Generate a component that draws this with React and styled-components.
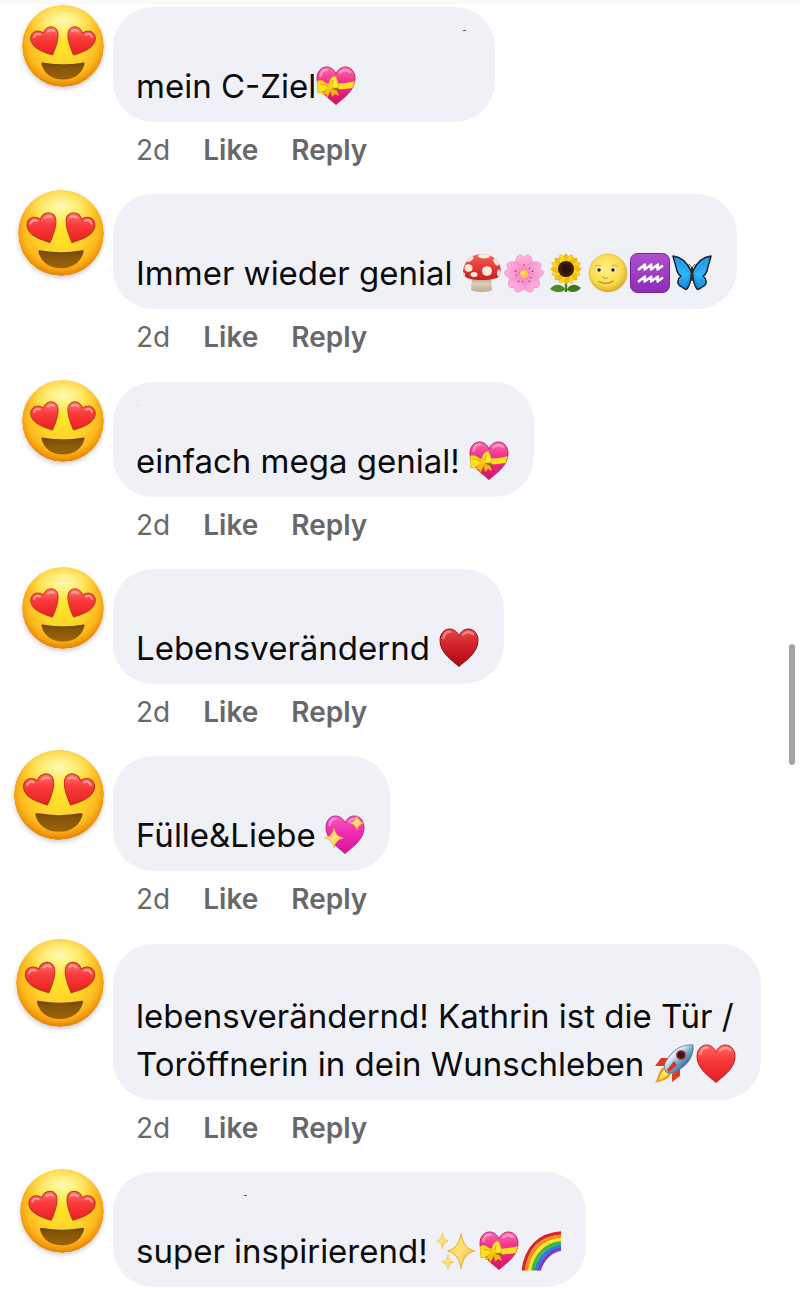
import React from "react";
import styled, { createGlobalStyle } from "styled-components";

const GlobalStyle = createGlobalStyle`
  * {
    box-sizing: border-box;
  }
  body {
    margin: 0;
    background: #ffffff;
    font-family: "Inter", "Liberation Sans", sans-serif;
    color: #0b0b0d;
  }
`;

const Thread = styled.main`
  display: flex;
  flex-direction: column;
  justify-content: space-between;
  min-height: 100vh;
  padding: 7px 32px 7px 0;
  background: linear-gradient(#fafafb 4px, #ffffff 4px);
`;

const Row = styled.article`
  display: flex;
  align-items: flex-start;
`;

const AvatarSlot = styled.div`
  flex: none;
  display: flex;
  align-items: center;
  justify-content: flex-end;
  width: 113px;
  height: 78px;
  padding-right: 9px;
`;

const Avatar = styled.svg`
  flex: none;
  width: ${(p) => p.$size}px;
  height: ${(p) => p.$size}px;
  border-radius: 50%;
  box-shadow: 0 2px 4px rgba(60, 50, 80, 0.25);
`;

const Body = styled.div`
  display: flex;
  flex-direction: column;
  align-items: flex-start;
`;

const Bubble = styled.div`
  min-width: ${(p) => (p.$wide ? "382px" : "0")};
  padding: 0 25px 12px 23px;
  border-radius: 40px;
  background: #f0f1f6;
`;

const NameLine = styled.div`
  display: flex;
  align-items: flex-start;
  height: ${(p) => (p.$short ? "48px" : "55px")};
  padding-top: 23px;
`;

const Speck = styled.span`
  width: 3px;
  height: 1px;
  margin-left: ${(p) => p.$at}px;
  background: ${(p) => (p.$faint ? "#dcdde1" : "#55565a")};
`;

const Text = styled.p`
  margin: 0;
  font-size: 33px;
  line-height: 48px;
  white-space: nowrap;
`;

const Icon = styled.svg`
  width: 40px;
  height: 40px;
  margin-right: 2px;
  vertical-align: -8px;
  overflow: visible;

  &:last-child {
    margin-right: 0;
  }
`;

const Actions = styled.div`
  display: flex;
  gap: 33px;
  padding: 11px 23px 0;
  font-size: 28px;
  line-height: 34px;
  color: #67686b;
`;

const Action = styled.button`
  padding: 0;
  border: 0;
  background: none;
  font: inherit;
  font-weight: 600;
  color: inherit;
  cursor: pointer;
`;

const ScrollThumb = styled.div`
  position: fixed;
  top: 644px;
  right: 5px;
  width: 6px;
  height: 121px;
  border-radius: 3px;
  background: #a5a5a5;
`;

const Defs = styled.svg`
  position: absolute;
  width: 0;
  height: 0;
`;

const HEART =
  "M20 38.500C14 33 1 25 1 12.500C1 6 5 1 10.500 1C15 1 18.500 4 20 8C21.500 4 25 1 29.500 1C35 1 39 6 39 12.500C39 25 26 33 20 38.500Z";
const EYE =
  "M30.500 50C22 47.500 10 43.500 8.700 34.500C8 27.500 15 23.500 21.500 28C22.500 22.500 30 19.500 34.300 24C38.500 29 34.500 41 30.500 50Z";
const STAR = "M0 -10Q1.500 -1.500 10 0Q1.500 1.500 0 10Q-1.500 1.500 -10 0Q-1.500 -1.500 0 -10Z";

function SharedDefs() {
  return (
    <Defs aria-hidden="true">
      <defs>
        <radialGradient id="face" cx="0.5" cy="0.44" r="0.56">
          <stop offset="0" stopColor="#ffe62c" />
          <stop offset="0.5" stopColor="#ffd52a" />
          <stop offset="0.78" stopColor="#fdb91f" />
          <stop offset="0.9" stopColor="#f39d0e" />
          <stop offset="1" stopColor="#df7f04" />
        </radialGradient>
        <radialGradient id="shine" cx="0.5" cy="0.35" r="0.5">
          <stop offset="0" stopColor="#fffcc0" stopOpacity="0.95" />
          <stop offset="0.55" stopColor="#fff88a" stopOpacity="0.6" />
          <stop offset="1" stopColor="#fff25a" stopOpacity="0" />
        </radialGradient>
        <linearGradient id="eye" x1="0" y1="0" x2="0" y2="1">
          <stop offset="0" stopColor="#ff7572" />
          <stop offset="0.4" stopColor="#fb3b3c" />
          <stop offset="1" stopColor="#e8201f" />
        </linearGradient>
        <linearGradient id="mouth" x1="0" y1="0" x2="0" y2="1">
          <stop offset="0" stopColor="#70450c" />
          <stop offset="0.3" stopColor="#865509" />
          <stop offset="1" stopColor="#9a6408" />
        </linearGradient>
        <linearGradient id="pink" x1="0" y1="0" x2="0" y2="1">
          <stop offset="0" stopColor="#ff6bae" />
          <stop offset="0.35" stopColor="#f2358f" />
          <stop offset="1" stopColor="#d80f68" />
        </linearGradient>
        <linearGradient id="magenta" x1="0" y1="0" x2="0" y2="1">
          <stop offset="0" stopColor="#fb5cc0" />
          <stop offset="0.4" stopColor="#ef2fae" />
          <stop offset="1" stopColor="#d9129a" />
        </linearGradient>
        <linearGradient id="red" x1="0" y1="0" x2="0" y2="1">
          <stop offset="0" stopColor="#ff6a62" />
          <stop offset="0.4" stopColor="#fa3a3a" />
          <stop offset="1" stopColor="#e01e26" />
        </linearGradient>
        <linearGradient id="darkRed" x1="0" y1="0" x2="0" y2="1">
          <stop offset="0" stopColor="#e8494a" />
          <stop offset="0.4" stopColor="#d3242b" />
          <stop offset="1" stopColor="#ae0710" />
        </linearGradient>
        <radialGradient id="moon" cx="0.45" cy="0.4" r="0.6">
          <stop offset="0" stopColor="#fff08a" />
          <stop offset="0.7" stopColor="#f7da4e" />
          <stop offset="1" stopColor="#d9ac2b" />
        </radialGradient>
        <linearGradient id="violet" x1="0" y1="0" x2="0" y2="1">
          <stop offset="0" stopColor="#b04fd2" />
          <stop offset="1" stopColor="#8f2bb4" />
        </linearGradient>
        <linearGradient id="wing" x1="0" y1="0" x2="0" y2="1">
          <stop offset="0" stopColor="#1f9be6" />
          <stop offset="0.6" stopColor="#2fb8fb" />
          <stop offset="1" stopColor="#1287dc" />
        </linearGradient>
        <linearGradient id="cap" x1="0" y1="0" x2="0" y2="1">
          <stop offset="0" stopColor="#f4645a" />
          <stop offset="0.5" stopColor="#e63a38" />
          <stop offset="1" stopColor="#c2201f" />
        </linearGradient>
        <linearGradient id="stem" x1="0" y1="0" x2="0" y2="1">
          <stop offset="0" stopColor="#a08b74" />
          <stop offset="0.4" stopColor="#dccdb6" />
          <stop offset="1" stopColor="#c2ad92" />
        </linearGradient>
        <linearGradient id="petal" x1="0" y1="0" x2="0" y2="1">
          <stop offset="0" stopColor="#ffb2de" />
          <stop offset="1" stopColor="#f97fc4" />
        </linearGradient>
        <linearGradient id="hull" x1="0" y1="0" x2="1" y2="1">
          <stop offset="0" stopColor="#4f9bd0" />
          <stop offset="0.35" stopColor="#e3f1f9" />
          <stop offset="0.55" stopColor="#6da4cc" />
          <stop offset="0.85" stopColor="#1d4c7c" />
        </linearGradient>
        <linearGradient id="gold" x1="0" y1="0" x2="1" y2="1">
          <stop offset="0" stopColor="#ffd447" />
          <stop offset="0.5" stopColor="#ffe27a" />
          <stop offset="1" stopColor="#efae22" />
        </linearGradient>
        <clipPath id="heartClip">
          <path d={HEART} />
        </clipPath>
        <clipPath id="capClip">
          <path d="M20 1C9 1 1 10 1 19C1 25 8 27 20 27C32 27 39 25 39 19C39 9 31 1 20 1Z" />
        </clipPath>
      </defs>
    </Defs>
  );
}

function HeartEye({ flip }) {
  return (
    <g transform={flip ? "translate(82 0) scale(-1 1)" : undefined}>
      <path d={EYE} fill="url(#eye)" stroke="#b9361a" strokeWidth="1" />
      <path
        d="M12 32Q14 27.500 18 29.500M26 26.500Q29 24 32 26"
        fill="none"
        stroke="#ffb0a8"
        strokeOpacity="0.8"
        strokeWidth="2"
        strokeLinecap="round"
      />
    </g>
  );
}

function HeartEyes({ size }) {
  return (
    <Avatar $size={size} viewBox="0 0 82 82" role="img" aria-label="Profile picture">
      <circle cx="41" cy="41" r="41" fill="url(#face)" />
      <ellipse cx="41" cy="22" rx="37" ry="22" fill="url(#shine)" />
      <HeartEye />
      <HeartEye flip />
      <path
        d="M19.500 59C19.200 57.500 20.500 57.300 22 57.700Q41 61 60 57.700C61.500 57.300 62.800 57.500 62.500 59C60 69 52 74.500 41 74.500C30 74.500 22 69 19.500 59Z"
        fill="url(#mouth)"
      />
    </Avatar>
  );
}

function Heart({ fill, edge }) {
  return (
    <>
      <path d={HEART} fill={`url(#${fill})`} stroke={edge} strokeWidth="1" />
      <path
        d="M4.500 10Q6 3.500 11 3.800M24 6.500Q29 2 34 6"
        fill="none"
        stroke="#ffffff"
        strokeOpacity="0.35"
        strokeWidth="2.500"
        strokeLinecap="round"
      />
    </>
  );
}

function Star({ x, y, w, h }) {
  return (
    <path
      d={STAR}
      transform={`translate(${x} ${y}) scale(${w / 20} ${h / 20})`}
      fill="url(#gold)"
      stroke="#e8a92a"
      strokeWidth="0.6"
    />
  );
}

const DRAWINGS = {
  ribbon: (
    <>
      <Heart fill="pink" edge="#c91c66" />
      <path d="M0 16Q20 20 40 15V21.500Q20 25 0 23Z" fill="#ffe01c" clipPath="url(#heartClip)" />
      <path d="M14 20L5 29L10 28L11 32L16 23Z" fill="#f3bd12" />
      <path d="M14 21L16 31L19 28L23 30L20 22Z" fill="#eeb512" />
      <path d="M15 21Q19 25 24 24.500L20 20Z" fill="#7c6410" />
      <path
        d="M13 20C8 14 2 13 1 16C2 19 1 22 2 27C7 27 11 24 13 20Z"
        fill="#ffdf20"
        stroke="#dfa50d"
        strokeWidth="0.7"
      />
      <path
        d="M14 20C12 15 15 11 19 10C21 12 22 17 23 21C19 23 16 22 14 20Z"
        fill="#ffe634"
        stroke="#dfa50d"
        strokeWidth="0.7"
      />
      <circle cx="13.500" cy="20.500" r="3" fill="#f9cb14" />
      <path d="M4 18Q8 18 12 20M17 14L16 19" fill="none" stroke="#d79b0b" strokeWidth="0.9" />
    </>
  ),
  mushroom: (
    <>
      <path d="M10 24L9 36Q9 39 20 39Q31 39 30 36L29 24Z" fill="url(#stem)" />
      <g clipPath="url(#capClip)">
        <rect width="40" height="28" fill="url(#cap)" />
        <ellipse cx="8" cy="6" rx="4" ry="2" fill="#f7ebe0" transform="rotate(-35 8 6)" />
        <ellipse cx="22" cy="3" rx="6" ry="2.500" fill="#f7ebe0" />
        <ellipse cx="6.500" cy="15" rx="4" ry="3.800" fill="#f7ebe0" />
        <ellipse cx="25" cy="18" rx="5" ry="4.800" fill="#f7ebe0" />
        <ellipse cx="12" cy="21.500" rx="3.500" ry="2.500" fill="#f7ebe0" />
        <ellipse cx="34" cy="9" rx="2" ry="4" fill="#f7ebe0" transform="rotate(-30 34 9)" />
        <ellipse cx="37" cy="20" rx="2" ry="3.500" fill="#f7ebe0" />
        <ellipse cx="1" cy="22" rx="2" ry="3" fill="#f7ebe0" />
      </g>
    </>
  ),
  blossom: (
    <>
      {[0, 72, 144, 216, 288].map((angle) => (
        <g key={angle} transform={`rotate(${angle} 20 21)`}>
          <path
            d="M20 22C12 17 9 8 14 3C16 1 18 2 20 4.500C22 2 24 1 26 3C31 8 28 17 20 22Z"
            fill="url(#petal)"
            stroke="#e985bb"
            strokeWidth="0.6"
          />
          <path d="M20 20V13M20 20L17 14M20 20L23 14" stroke="#ea6fae" strokeWidth="0.5" />
          <circle cx="20" cy="12" r="0.8" fill="#a82d62" />
          <circle cx="16.500" cy="14" r="0.7" fill="#a82d62" />
        </g>
      ))}
      <circle cx="20" cy="21" r="4" fill="#f7c744" />
      <circle cx="19" cy="20" r="1.800" fill="#ffe58a" />
    </>
  ),
  sunflower: (
    <>
      <path d="M20 26V39" stroke="#4a7d1c" strokeWidth="2.400" />
      <path d="M19 36C15 30 8 31 4 36C9 40 15 40 19 37Z" fill="#4c8d24" />
      <path d="M21 36C25 30 31 31 35 35C31 40 25 40 21 37Z" fill="#3d7a1b" />
      {Array.from({ length: 16 }, (_, i) => (
        <path
          key={i}
          d="M17 12Q15.500 4 20 0.500Q24.500 4 23 12Z"
          transform={`rotate(${i * 22.5} 20 16)`}
          fill={i % 2 ? "#ffd91f" : "#f7bd0d"}
          stroke="#d99a08"
          strokeWidth="0.4"
        />
      ))}
      <circle cx="20" cy="16" r="8" fill="#3d1c08" />
      <circle cx="20" cy="16" r="4.500" fill="#2a1206" />
    </>
  ),
  moon: (
    <>
      <circle cx="20" cy="20" r="19" fill="url(#moon)" stroke="#d6ae36" strokeWidth="0.6" />
      <ellipse cx="10.500" cy="17" rx="2.600" ry="2" fill="#fffbe0" />
      <ellipse cx="25.500" cy="17" rx="2.800" ry="2" fill="#fffbe0" />
      <circle cx="11" cy="17" r="1.800" fill="#2c1f0c" />
      <circle cx="25" cy="17" r="1.800" fill="#2c1f0c" />
      <path d="M7 13Q10 11 13 13M23 13Q26 11 30 13" fill="none" stroke="#d2aa34" strokeWidth="0.9" />
      <path d="M15 23Q15 26 17 25.500Q19 26 20 24" fill="none" stroke="#c99f2c" strokeWidth="1" />
      <path d="M11 28.500Q18 32.500 25 28" fill="none" stroke="#c08528" strokeWidth="1.400" strokeLinecap="round" />
    </>
  ),
  aquarius: (
    <>
      <rect x="0.500" y="0.500" width="39" height="39" rx="7" fill="url(#violet)" stroke="#7e249f" />
      <path
        d="M8 17L15 11.500L14.500 16.500L21.500 11.500L21 16.500L28 11.500L27.500 16.500L33 12.500M8 29L15 23.500L14.500 28.500L21.500 23.500L21 28.500L28 23.500L27.500 28.500L33 24.500"
        fill="none"
        stroke="#ffffff"
        strokeWidth="2.400"
        strokeLinejoin="round"
      />
    </>
  ),
  butterfly: (
    <>
      {["left", "right"].map((side) => (
        <g key={side} transform={side === "right" ? "translate(40 0) scale(-1 1)" : undefined}>
          <path
            d="M19 18C15 9 9 4 1 3C2 8 4 12 5 18C6 21 7 22 9 23C5 26 5 31 8 33C11 34 12 37 15 36C18 32 19 26 19.500 21Z"
            fill="url(#wing)"
            stroke="#1a2027"
            strokeWidth="1.500"
            strokeLinejoin="round"
          />
          <path d="M18 20L7 9M18 21L9 29M18 22L14 34" stroke="#1273b8" strokeWidth="0.500" />
        </g>
      ))}
      <path d="M20 15V27" stroke="#3a2414" strokeWidth="2.200" strokeLinecap="round" />
      <path d="M20 15L17 11M20 15L23 11" stroke="#26190f" strokeWidth="0.700" />
    </>
  ),
  suit: <Heart fill="darkRed" edge="#8e1218" />,
  heart: <Heart fill="red" edge="#c91f25" />,
  sparkling: (
    <>
      <Heart fill="magenta" edge="#c81b8e" />
      <Star x={32} y={8} w={14} h={15} />
      <Star x={9} y={23} w={19} h={20} />
    </>
  ),
  rocket: (
    <>
      <path d="M15 14L7 14L1 22L10 22ZM26 25L26 32L18 38L18 30Z" fill="#e23a20" />
      <path d="M10 23C4 26 5 33 1 39C8 37 14 36 17 30Z" fill="#f99b16" />
      <path d="M11 25C7 28 7 32 5 36C10 34 13 32 15 29Z" fill="#ffec52" />
      <path
        d="M39 1C29 0 18 5 11 19Q9 24 12 28Q16 31 21 28C35 21 40 11 39 1Z"
        fill="url(#hull)"
        stroke="#3b6184"
        strokeWidth="0.7"
      />
      <circle cx="27" cy="11" r="5" fill="#c7312b" />
      <circle cx="27" cy="11" r="3.600" fill="#33171b" />
      <path d="M20 17L13 26L15 28L23 21Z" fill="#dc3423" />
    </>
  ),
  sparkles: (
    <>
      <Star x={24} y={20} w={27} h={36} />
      <Star x={5.5} y={10} w={11} h={16} />
      <Star x={11} y={31} w={12} h={15} />
    </>
  ),
  rainbow: (
    <g fill="none" strokeWidth="3.500">
      <path d="M2.200 39.500C5 17 18 3.500 40 2" stroke="#dc2422" />
      <path d="M5.500 39.500C8 20 20 7 40 5.300" stroke="#f58a1f" />
      <path d="M8.800 39.500C11 22 22 10.500 40 8.600" stroke="#fce52b" />
      <path d="M12 39.500C14 25 24 13.500 40 11.800" stroke="#46b43a" />
      <path d="M15.200 39.500C17 28 26 17 40 15" stroke="#2381e2" />
      <path d="M18.200 39.500C20 31 28 20 40 18" stroke="#7b3cc4" />
    </g>
  ),
};

const COMMENTS = [
  { size: 82, lines: ["mein C-Ziel"], icons: ["ribbon"], wide: true, tight: true, speck: { at: 327 } },
  {
    size: 86,
    lines: ["Immer wieder genial"],
    icons: ["mushroom", "blossom", "sunflower", "moon", "aquarius", "butterfly"],
  },
  { size: 82, lines: ["einfach mega genial!"], icons: ["ribbon"], speck: { at: 1, faint: true } },
  { size: 82, lines: ["Lebensverändernd"], icons: ["suit"] },
  { size: 90, lines: ["Fülle&Liebe"], icons: ["sparkling"] },
  {
    size: 88,
    lines: ["lebensverändernd! Kathrin ist die Tür /", "Toröffnerin in dein Wunschleben"],
    icons: ["rocket", "heart"],
  },
  {
    size: 84,
    lines: ["super inspirierend!"],
    icons: ["sparkles", "ribbon", "rainbow"],
    speck: { at: 108 },
    last: true,
  },
];

function Comment({ size, lines, icons, wide, tight, speck, last }) {
  return (
    <Row>
      <AvatarSlot>
        <HeartEyes size={size} />
      </AvatarSlot>
      <Body>
        <Bubble $wide={wide}>
          <NameLine $short={lines.length > 1}>
            {speck && <Speck $at={speck.at} $faint={speck.faint} />}
          </NameLine>
          <Text>
            {lines.map((line, i) => (
              <React.Fragment key={line}>
                {i > 0 && <br />}
                {line}
              </React.Fragment>
            ))}
            {!tight && " "}
            {icons.map((name) => (
              <Icon key={name} viewBox="0 0 40 40" role="img" aria-label={name}>
                {DRAWINGS[name]}
              </Icon>
            ))}
          </Text>
        </Bubble>
        {!last && (
          <Actions>
            <span>2d</span>
            <Action type="button">Like</Action>
            <Action type="button">Reply</Action>
          </Actions>
        )}
      </Body>
    </Row>
  );
}

export default function App() {
  return (
    <>
      <GlobalStyle />
      <SharedDefs />
      <Thread>
        {COMMENTS.map((comment) => (
          <Comment key={comment.lines[0]} {...comment} />
        ))}
      </Thread>
      <ScrollThumb />
    </>
  );
}
